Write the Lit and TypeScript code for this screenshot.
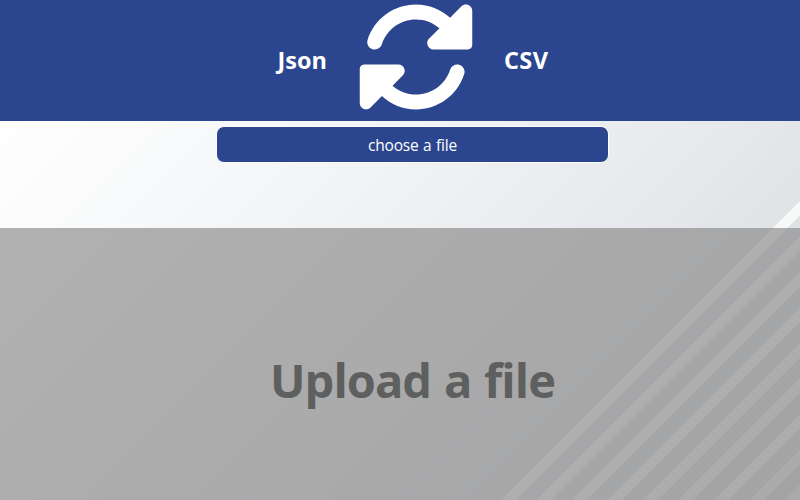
import { LitElement, html, css } from "lit";
import { customElement } from "lit/decorators.js";

@customElement("app-root")
export class AppRoot extends LitElement {
  static styles = css`
    :host {
      display: flex;
      flex-direction: column;
      position: relative;
      isolation: isolate;
      box-sizing: border-box;
      height: 500px;
      overflow: hidden;
      font-family: "Open Sans", "Noto Sans", sans-serif;
      background: linear-gradient(135deg, #fefefe 100px, #f9fafb 220px, #f4f5f6 340px, #ecedf0 509px, #e8e9ec 590px, #e0e4e7 700px, #d7d9dc 919px);
    }
    :host::before {
      content: "";
      position: absolute;
      inset: 0;
      z-index: -1;
      background: repeating-linear-gradient(135deg, transparent 0 4.8px, #f7f8f8 5.3px 15px, transparent 15.5px 25.1px);
      mask-image: linear-gradient(135deg, transparent 704px, #000 704px, rgba(0, 0, 0, 0.6) 919px);
    }
    header {
      flex: none;
      height: 121px;
      display: grid;
      grid-template-columns: 356px 120px 1fr;
      align-items: center;
      background: #2b468e;
      color: #fff;
      overflow: hidden;
    }
    .name {
      font-weight: 700;
      font-size: 23.5px;
      line-height: 32px;
      margin-top: -2px;
    }
    .from { justify-self: end; margin-right: 29px; }
    .to { margin-left: 28px; letter-spacing: 0.4px; }
    .icon { width: 120px; height: 120px; margin-top: -7px; display: block; }
    .bar {
      flex: none;
      height: 107px;
      display: flex;
      align-items: flex-start;
      padding: 5px 0 0 216px;
      box-sizing: border-box;
    }
    .choose {
      box-sizing: border-box;
      width: 393px;
      height: 37px;
      padding: 2px 0 0;
      border: 1px solid #fdfdfe;
      border-radius: 8px;
      background: #2b468e;
      color: #fff;
      font: 400 15.5px/33px "Open Sans", "Noto Sans", sans-serif;
      letter-spacing: -0.2px;
      word-spacing: 0.7px;
    }
    .drop {
      flex: 1;
      display: flex;
      justify-content: center;
      align-items: flex-start;
      padding: 119px 0 0 25px;
      box-sizing: border-box;
      background: rgba(128, 127, 127, 0.6);
    }
    h1 {
      margin: 0;
      font-size: 47px;
      line-height: 66px;
      font-weight: 700;
      letter-spacing: -0.95px;
      word-spacing: 1.5px;
      color: #5e5f5f;
      white-space: nowrap;
    }
  `;

  render() {
    return html`
      <header>
        <span class="name from">Json</span>
        <svg class="icon" viewBox="0 0 512 512" fill="currentColor" aria-hidden="true">
          <path d="M449.9 39.96l-48.5 48.53C362.5 53.19 311.4 32 256 32C161.5 32 78.59 92.34 49.58 182.2c-5.438 16.81 3.797 34.88 20.61 40.28c16.97 5.5 34.86-3.812 40.3-20.59C130.9 138.5 189.4 96 256 96c37.96 0 73 14.18 100.2 37.8L311.1 178C295.1 194.8 306.8 223.4 330.4 224h146.9C487.7 223.7 496 215.3 496 204.9V59.04C496 34.99 466.9 22.95 449.9 39.96zM441.8 289.6c-16.94-5.438-34.88 3.812-40.3 20.59C381.1 373.5 322.6 416 256 416c-37.96 0-73-14.18-100.2-37.8L200 334C216.9 317.2 205.2 288.6 181.6 288H34.66C24.32 288.3 16 296.6 16 306.1v145.9c0 24.04 29.07 36.08 46.07 19.07l48.5-48.53C149.5 458.8 200.6 480 255.1 480c94.45 0 177.4-60.34 206.4-150.2C467.9 313 458.6 294.1 441.8 289.6z" />
        </svg>
        <span class="name to">CSV</span>
      </header>
      <div class="bar"><button class="choose">choose a file</button></div>
      <main class="drop"><h1>Upload a file</h1></main>
    `;
  }
}
